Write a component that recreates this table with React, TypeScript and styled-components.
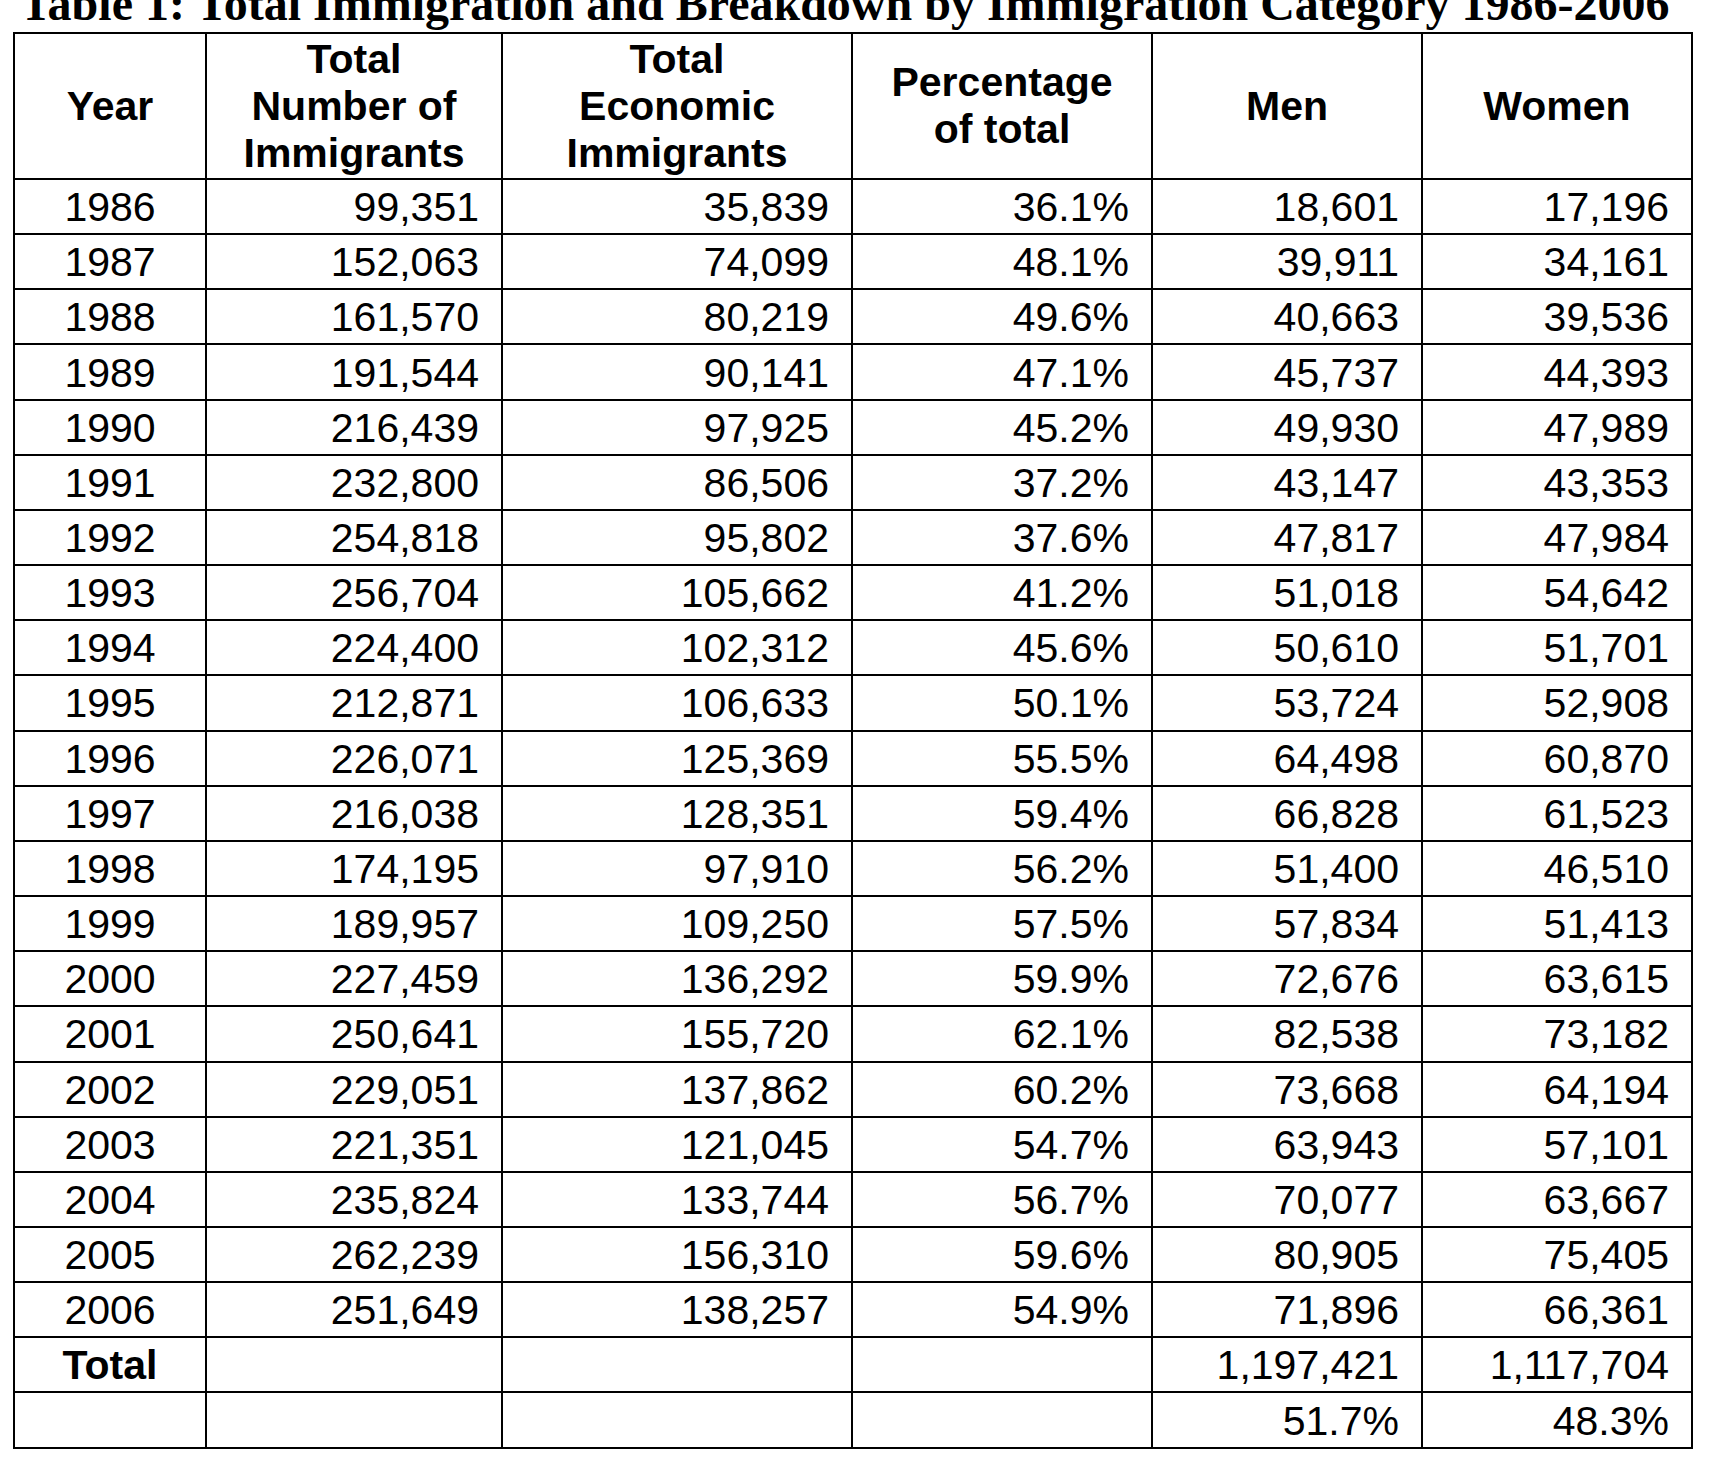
import React from "react";
import styled, { createGlobalStyle } from "styled-components";

const GlobalStyle = createGlobalStyle`
  html, body {
    margin: 0;
    padding: 0;
    background: #ffffff;
  }
  body {
    font-family: "Liberation Sans", Arial, sans-serif;
    color: #000;
    overflow: hidden;
  }
`;

const Page = styled.div`
  width: 1714px;
  height: 1464px;
  background: #fff;
  overflow: hidden;
`;

const Title = styled.h1`
  margin: -20px 0 0 20px;
  height: 52px;
  font-family: "Liberation Serif", "Times New Roman", serif;
  font-weight: bold;
  font-size: 48px;
  line-height: 48px;
  white-space: nowrap;
  color: #000;
`;

const Table = styled.table`
  margin-left: 13px;
  border-collapse: collapse;
  table-layout: fixed;
  width: 1680px;
  border: 2px solid #000;
`;

const HeadRow = styled.tr`
  height: 146px;
`;

const BodyRow = styled.tr`
  height: 55.17px;
`;

const HeadCell = styled.th`
  border: 2px solid #000;
  padding: 0 4px;
  font-weight: bold;
  font-size: 41px;
  line-height: 47px;
  text-align: center;
  vertical-align: middle;
`;

const Cell = styled.td<{ $align?: "left" | "center" | "right"; $bold?: boolean }>`
  border: 2px solid #000;
  padding: 2px 22px 0 4px;
  font-size: 41px;
  line-height: 47px;
  font-weight: ${(p) => (p.$bold ? "bold" : "normal")};
  text-align: ${(p) => p.$align ?? "right"};
  vertical-align: middle;
  white-space: nowrap;
`;

const YearCell = styled(Cell)`
  padding: 2px 4px 0 4px;
`;

const widths = [192, 296, 350, 300, 270, 270];

const rows: string[][] = [
  ["1986", "99,351", "35,839", "36.1%", "18,601", "17,196"],
  ["1987", "152,063", "74,099", "48.1%", "39,911", "34,161"],
  ["1988", "161,570", "80,219", "49.6%", "40,663", "39,536"],
  ["1989", "191,544", "90,141", "47.1%", "45,737", "44,393"],
  ["1990", "216,439", "97,925", "45.2%", "49,930", "47,989"],
  ["1991", "232,800", "86,506", "37.2%", "43,147", "43,353"],
  ["1992", "254,818", "95,802", "37.6%", "47,817", "47,984"],
  ["1993", "256,704", "105,662", "41.2%", "51,018", "54,642"],
  ["1994", "224,400", "102,312", "45.6%", "50,610", "51,701"],
  ["1995", "212,871", "106,633", "50.1%", "53,724", "52,908"],
  ["1996", "226,071", "125,369", "55.5%", "64,498", "60,870"],
  ["1997", "216,038", "128,351", "59.4%", "66,828", "61,523"],
  ["1998", "174,195", "97,910", "56.2%", "51,400", "46,510"],
  ["1999", "189,957", "109,250", "57.5%", "57,834", "51,413"],
  ["2000", "227,459", "136,292", "59.9%", "72,676", "63,615"],
  ["2001", "250,641", "155,720", "62.1%", "82,538", "73,182"],
  ["2002", "229,051", "137,862", "60.2%", "73,668", "64,194"],
  ["2003", "221,351", "121,045", "54.7%", "63,943", "57,101"],
  ["2004", "235,824", "133,744", "56.7%", "70,077", "63,667"],
  ["2005", "262,239", "156,310", "59.6%", "80,905", "75,405"],
  ["2006", "251,649", "138,257", "54.9%", "71,896", "66,361"],
];

export default function App() {
  return (
    <Page>
      <GlobalStyle />
      <Title>Table 1: Total Immigration and Breakdown by Immigration Category 1986-2006</Title>
      <Table>
        <colgroup>
          {widths.map((w, i) => (
            <col key={i} style={{ width: w }} />
          ))}
        </colgroup>
        <thead>
          <HeadRow>
            <HeadCell>Year</HeadCell>
            <HeadCell>
              Total
              <br />
              Number of
              <br />
              Immigrants
            </HeadCell>
            <HeadCell>
              Total
              <br />
              Economic
              <br />
              Immigrants
            </HeadCell>
            <HeadCell>
              Percentage
              <br />
              of total
            </HeadCell>
            <HeadCell>Men</HeadCell>
            <HeadCell>Women</HeadCell>
          </HeadRow>
        </thead>
        <tbody>
          {rows.map((r) => (
            <BodyRow key={r[0]}>
              <YearCell $align="center">{r[0]}</YearCell>
              {r.slice(1).map((v, i) => (
                <Cell key={i}>{v}</Cell>
              ))}
            </BodyRow>
          ))}
          <BodyRow>
            <YearCell $align="center" $bold>
              Total
            </YearCell>
            <Cell />
            <Cell />
            <Cell />
            <Cell>1,197,421</Cell>
            <Cell>1,117,704</Cell>
          </BodyRow>
          <BodyRow>
            <YearCell $align="center" />
            <Cell />
            <Cell />
            <Cell />
            <Cell>51.7%</Cell>
            <Cell>48.3%</Cell>
          </BodyRow>
        </tbody>
      </Table>
    </Page>
  );
}
